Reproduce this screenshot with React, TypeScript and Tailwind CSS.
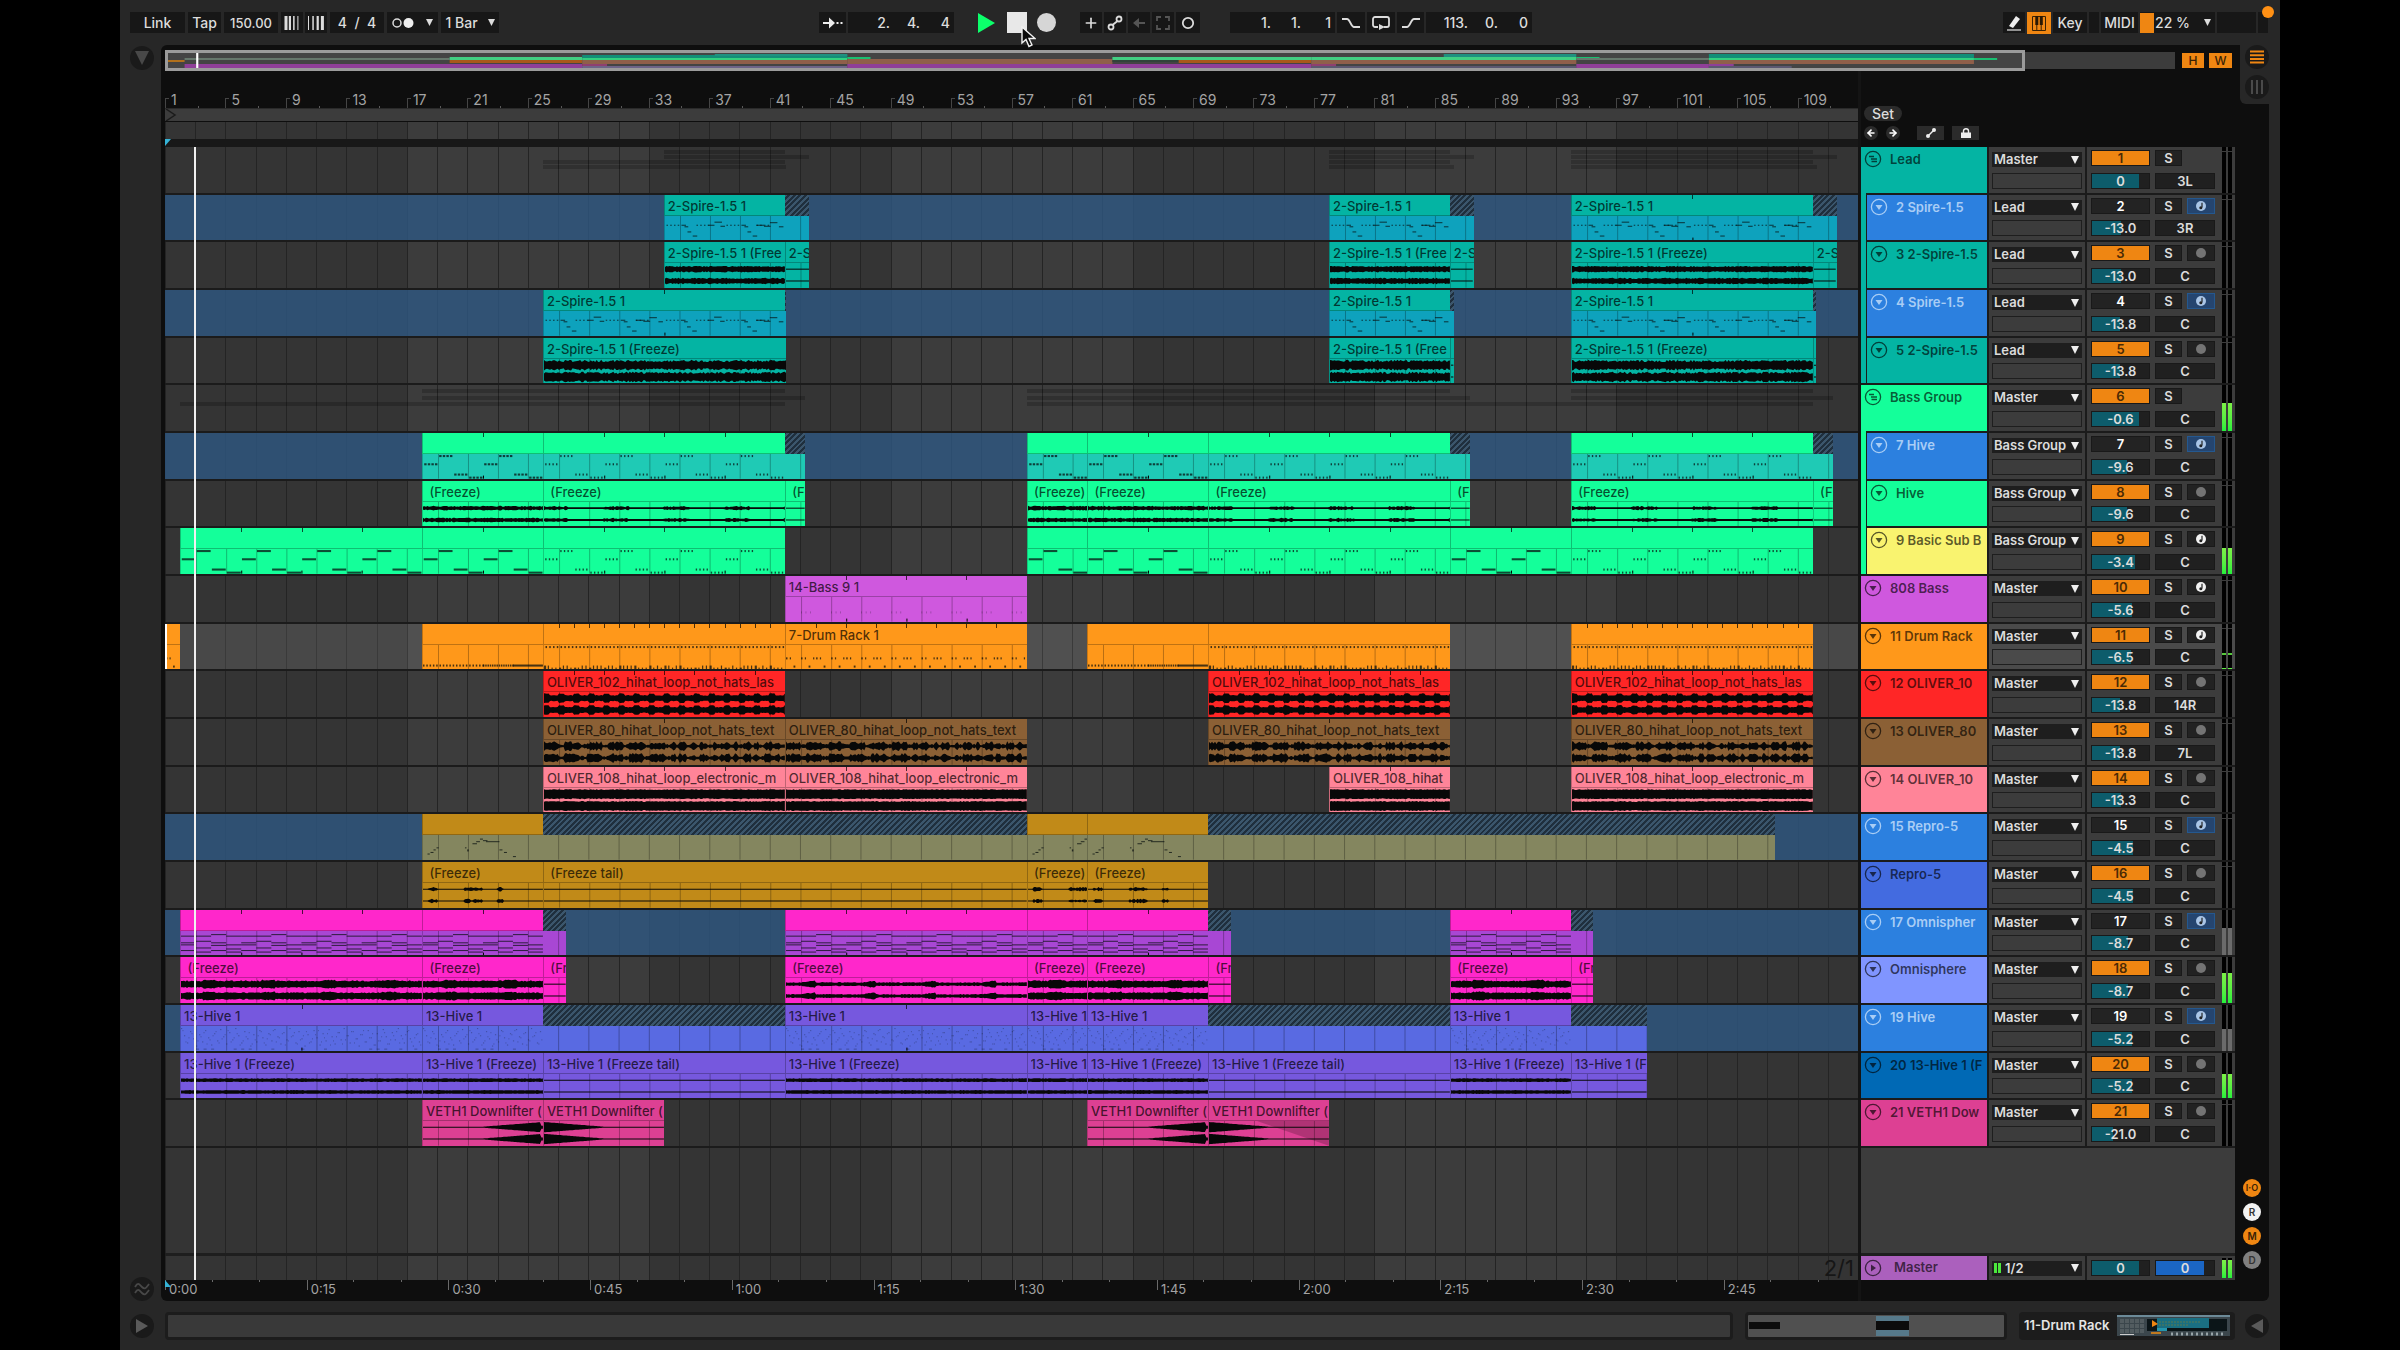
import type { ReactNode } from 'react';
import clsx from 'clsx';
import { ArrowLeft, ArrowRight, Plus } from 'lucide-react';

const BARS = 112;

type Kind =
  | 'none' | 'spire' | 'hiveHeavy' | 'hiveLight' | 'sub' | 'bass' | 'drumRoll' | 'drumFull' | 'drumRack'
  | 'repro' | 'omni' | 'dots'
  | 'wSpire' | 'wLoud' | 'wThin' | 'wHive' | 'wHiveSoft' | 'wRed' | 'wBrown' | 'wPink' | 'wRepro'
  | 'wOmni' | 'wOmniSwell' | 'wFlat' | 'wRise' | 'wFall';

// start bar, end bar, content, title, bars between loop ticks
type Clip = [number, number, Kind, string?, number?];

interface Track {
  num: number;
  name: string;
  head: string;
  group?: boolean;
  child?: string;
  color?: string;
  body?: string;
  frozen?: boolean;
  selected?: boolean;
  out: string;
  vol: string;
  fill: number;
  pan?: string;
  arm?: 'note' | 'audio';
  meter?: number;
  clips: Clip[];
  tails?: [number, number][];
  summary?: [number, number, number][];
}

const TEAL = '#04b4a3';
const GREEN = '#14ff9a';
const BLUE = '#2c80df';
const SP = '2-Spire-1.5 1';
const SPF = '2-Spire-1.5 1 (Freeze)';
const SPF_SHORT = '2-Spire-1.5 1 (Free';
const SPF_TAIL = '2-S';
const FZ = ' (Freeze)';
const HV = '13-Hive 1';
const HVF = '13-Hive 1 (Freeze)';
const HVT = '13-Hive 1 (Freeze tail)';
const O102 = 'OLIVER_102_hihat_loop_not_hats_las';
const O80 = 'OLIVER_80_hihat_loop_not_hats_text';
const O108 = 'OLIVER_108_hihat_loop_electronic_m';
const VETH = 'VETH1 Downlifter (';

const tracks: Track[] = [
  {
    num: 1, name: 'Lead', head: TEAL, group: true, out: 'Master', vol: '0', fill: 83, pan: '3L', clips: [],
    summary: [
      [33, 41, 3], [33, 42.6, 8], [25, 41, 13], [25, 41.1, 18],
      [77, 85, 3], [77, 86.6, 8], [77, 85, 13], [77, 85.3, 18],
      [93, 109, 3], [93, 110.6, 8], [93, 109, 13], [93, 109.3, 18],
    ],
  },
  {
    num: 2, name: '2 Spire-1.5', head: BLUE, child: TEAL, color: TEAL, body: '#0ea2bd', frozen: true,
    out: 'Lead', vol: '-13.0', fill: 50, pan: '3R', arm: 'note',
    clips: [[33, 41, 'spire', SP], [77, 85, 'spire', SP], [93, 109, 'spire', SP, 8]],
    tails: [[41, 42.6], [85, 86.6], [109, 110.6]],
  },
  {
    num: 3, name: '3 2-Spire-1.5', head: TEAL, child: TEAL, color: TEAL, out: 'Lead', vol: '-13.0', fill: 50, arm: 'audio',
    clips: [
      [33, 41, 'wSpire', SPF_SHORT], [41, 42.6, 'wThin', SPF_TAIL], [77, 85, 'wSpire', SPF_SHORT], [85, 86.6, 'wThin', SPF_TAIL],
      [93, 109, 'wSpire', SPF], [109, 110.6, 'wThin', SPF_TAIL],
    ],
  },
  {
    num: 4, name: '4 Spire-1.5', head: BLUE, child: TEAL, color: TEAL, body: '#0ea2bd', frozen: true,
    out: 'Lead', vol: '-13.8', fill: 49, arm: 'note',
    clips: [[25, 41, 'spire', SP, 8], [77, 85, 'spire', SP], [93, 109, 'spire', SP, 8]],
    tails: [[41, 41.1], [85, 85.3], [109, 109.25]],
  },
  {
    num: 5, name: '5 2-Spire-1.5', head: TEAL, child: TEAL, color: TEAL, out: 'Lead', vol: '-13.8', fill: 49, arm: 'audio',
    clips: [
      [25, 41.1, 'wLoud', SPF], [77, 85, 'wLoud', SPF_SHORT], [85, 85.3, 'wThin'],
      [93, 109, 'wLoud', SPF], [109, 109.25, 'wThin'],
    ],
  },
  {
    num: 6, name: 'Bass Group', head: GREEN, group: true, out: 'Master', vol: '-0.6', fill: 83, meter: 62, clips: [],
    summary: [
      [17, 41, 4], [17, 42.35, 11], [1, 41, 17],
      [57, 85, 4], [57, 86.3, 11], [57, 109, 17], [93, 109, 4], [93, 110.35, 11],
    ],
  },
  {
    num: 7, name: '7 Hive', head: BLUE, child: GREEN, color: GREEN, body: '#1fcab5', frozen: true,
    out: 'Bass Group', vol: '-9.6', fill: 61, arm: 'note',
    clips: [
      [17, 25, 'hiveHeavy', '', 4], [25, 41, 'hiveLight', '', 4], [57, 61, 'hiveHeavy'], [61, 69, 'hiveHeavy', '', 4],
      [69, 85, 'hiveLight', '', 4], [93, 109, 'hiveLight', '', 4],
    ],
    tails: [[41, 42.35], [85, 86.35], [109, 110.35]],
  },
  {
    num: 8, name: 'Hive', head: GREEN, child: GREEN, color: GREEN, out: 'Bass Group', vol: '-9.6', fill: 61, arm: 'audio',
    clips: [
      [17, 25, 'wHive', FZ], [25, 41, 'wHiveSoft', FZ], [41, 42.35, 'wThin', ' (F'],
      [57, 61, 'wHive', FZ], [61, 69, 'wHive', FZ], [69, 85, 'wHiveSoft', FZ], [85, 86.35, 'wThin', ' (F'],
      [93, 109, 'wHiveSoft', FZ], [109, 110.35, 'wThin', ' (F'],
    ],
  },
  {
    num: 9, name: '9 Basic Sub B', head: '#f9f36f', child: GREEN, color: GREEN, out: 'Bass Group', vol: '-3.4', fill: 76, arm: 'note', meter: 56,
    clips: [
      [1, 17, 'sub', '', 4], [17, 25, 'sub', '', 4], [25, 41, 'hiveLight', '', 4], [57, 61, 'sub'], [61, 69, 'sub', '', 4],
      [69, 85, 'hiveLight', '', 4], [85, 93, 'sub', '', 4], [93, 109, 'hiveLight', '', 4],
    ],
  },
  {
    num: 10, name: '808 Bass', head: '#cf58de', color: '#cf58de', out: 'Master', vol: '-5.6', fill: 70, arm: 'note',
    clips: [[41, 57, 'bass', '14-Bass 9 1', 4]],
  },
  {
    num: 11, name: '11 Drum Rack', head: '#ff981a', color: '#ff981a', selected: true, out: 'Master', vol: '-6.5', fill: 68, arm: 'note', meter: 3,
    clips: [
      [0, 1, 'drumRack'], [17, 25, 'drumRoll'], [25, 41, 'drumFull', '', 1], [41, 57, 'drumRack', '7-Drum Rack 1', 2],
      [61, 69, 'drumRoll'], [69, 85, 'drumFull'], [93, 109, 'drumFull', '', 1],
    ],
  },
  {
    num: 12, name: '12 OLIVER_10', head: '#ff2626', color: '#ff2626', out: 'Master', vol: '-13.8', fill: 49, pan: '14R', arm: 'audio',
    clips: [[25, 41, 'wRed', O102, 2], [69, 85, 'wRed', O102, 2], [93, 109, 'wRed', O102, 2]],
  },
  {
    num: 13, name: '13 OLIVER_80', head: '#8b6035', color: '#8b6035', out: 'Master', vol: '-13.8', fill: 49, pan: '7L', arm: 'audio',
    clips: [[25, 41, 'wBrown', O80, 8], [41, 57, 'wBrown', O80, 8], [69, 85, 'wBrown', O80, 8], [93, 109, 'wBrown', O80, 8]],
  },
  {
    num: 14, name: '14 OLIVER_10', head: '#ff8498', color: '#ff8498', out: 'Master', vol: '-13.3', fill: 51, arm: 'audio',
    clips: [[25, 41, 'wPink', O108, 4], [41, 57, 'wPink', O108, 4], [77, 85, 'wPink', 'OLIVER_108_hihat', 4], [93, 109, 'wPink', O108, 4]],
  },
  {
    num: 15, name: '15 Repro-5', head: BLUE, color: '#c18a18', body: '#84865f', frozen: true, out: 'Master', vol: '-4.5', fill: 72, arm: 'note',
    clips: [[17, 25, 'repro'], [57, 61, 'repro'], [61, 69, 'repro']],
    tails: [[25, 57], [69, 106.5]],
  },
  {
    num: 16, name: 'Repro-5', head: '#436be0', color: '#c18a18', out: 'Master', vol: '-4.5', fill: 72, arm: 'audio',
    clips: [[17, 25, 'wRepro', FZ], [25, 57, 'wThin', ' (Freeze tail)'], [57, 61, 'wRepro', FZ], [61, 69, 'wRepro', FZ]],
  },
  {
    num: 17, name: '17 Omnispher', head: BLUE, color: '#ff27cb', body: '#a847d4', frozen: true, out: 'Master', vol: '-8.7', fill: 64, arm: 'note', meter: 60,
    clips: [
      [1, 17, 'omni', '', 4], [17, 25, 'omni', '', 4], [41, 57, 'omni', '', 4], [57, 61, 'omni'], [61, 69, 'omni', '', 4],
      [85, 93, 'omni', '', 4],
    ],
    tails: [[25, 26.5], [69, 70.5], [93, 94.5]],
  },
  {
    num: 18, name: 'Omnisphere', head: '#8095ff', color: '#ff27cb', out: 'Master', vol: '-8.7', fill: 64, arm: 'audio', meter: 66,
    clips: [
      [1, 17, 'wOmni', FZ], [17, 25, 'wOmni', FZ], [25, 26.5, 'wThin', ' (Fr'], [41, 57, 'wOmniSwell', FZ],
      [57, 61, 'wOmni', FZ], [61, 69, 'wOmni', FZ], [69, 70.5, 'wThin', ' (Fr'], [85, 93, 'wOmni', FZ], [93, 94.5, 'wThin', ' (Fr'],
    ],
  },
  {
    num: 19, name: '19 Hive', head: BLUE, color: '#7658de', body: '#596ae2', frozen: true, out: 'Master', vol: '-5.2', fill: 71, arm: 'note', meter: 48,
    clips: [
      [1, 17, 'dots', HV, 8], [17, 25, 'dots', HV], [41, 57, 'dots', HV, 8], [57, 61, 'dots', HV], [61, 69, 'dots', HV],
      [85, 93, 'dots', HV],
    ],
    tails: [[25, 41], [69, 85], [93, 98.05]],
  },
  {
    num: 20, name: '20 13-Hive 1 (F', head: '#0069b5', color: '#7658de', out: 'Master', vol: '-5.2', fill: 71, arm: 'audio', meter: 54,
    clips: [
      [1, 17, 'wFlat', HVF], [17, 25, 'wFlat', HVF], [25, 41, 'wThin', HVT], [41, 57, 'wFlat', HVF], [57, 61, 'wFlat', HV],
      [61, 69, 'wFlat', HVF], [69, 85, 'wThin', HVT], [85, 93, 'wFlat', HVF], [93, 98.05, 'wThin', '13-Hive 1 (F'],
    ],
  },
  {
    num: 21, name: '21 VETH1 Dow', head: '#dd4093', color: '#dd4093', out: 'Master', vol: '-21.0', fill: 36, arm: 'audio',
    clips: [[17, 25, 'wRise', VETH], [25, 33, 'wFall', VETH], [61, 69, 'wRise', VETH], [69, 77, 'wFall', VETH]],
  },
];

const U = 15;
const pct = (bars: number) => `${(bars / BARS) * 100}%`;

function noise(i: number) {
  const v = Math.sin(i * 12.9898 + 4.1) * 43758.5453;
  return v - Math.floor(v);
}

// rectangles as [x in bars, y, width in bars, height]
function notes(kind: Kind, len: number) {
  const out: [number, number, number, number][] = [];
  const fill = (from: number, to: number, y: number, step: number, w: number, h: number) => {
    for (let x = from; x < to - 0.01; x += step) out.push([x, y, w, h]);
  };
  for (let b = 0; b < len; b += 4) {
    if (kind === 'spire') {
      const alt = (b / 4) % 2;
      fill(b + 0.1, b + 1, 8.5, 0.25, 0.1, 1);
      out.push([b + 1.1, 8.5, 0.3, 1], [b + 1.3, 10, 0.25, 1], [b + 1.5, 15, 0.25, 1], [b + 1.85, 19, 0.3, 1]);
      fill(b + 2.1, b + 2.9, 8.5, 0.25, 0.1, 1);
      if (alt) out.push([b + 2.1, 8.5, 0.5, 1], [b + 2.6, 9.5, 0.45, 1], [b + 3, 6, 0.5, 1], [b + 3.6, 10, 0.3, 1]);
      else out.push([b + 2.9, 8.5, 0.4, 1], [b + 3.3, 5.5, 0.5, 1], [b + 3.7, 9.5, 0.3, 1]);
    }
    if (kind === 'hiveHeavy' || kind === 'hiveLight') {
      const w = kind === 'hiveHeavy' ? 0.16 : 0.09;
      [9, 1, 19, 22].forEach((y, i) => fill(b + i + 0.08, b + i + 1, y, 0.24, w, 2));
    }
    if (kind === 'sub') {
      [9, 1, 19, 22].forEach((y, i) => out.push([b + i + 0.05, y, 0.92, 2]));
    }
    if (kind === 'omni') {
      out.push([b, 4.5, 2, 1], [b + 2, 3, 1, 1], [b + 3, 4.5, 1, 1]);
      out.push([b, 13, 1, 1], [b + 1, 9.5, 1, 1], [b + 2, 11, 1, 1], [b + 3, 13, 1, 1]);
      out.push([b, 11, 1, 1], [b + 1, 16, 1, 1], [b + 2, 13.5, 1, 1], [b + 3, 17, 1, 1]);
      out.push([b, 18.5, 1, 1], [b + 1, 20, 1, 1], [b + 2, 18.5, 1, 1], [b + 3, 20, 1, 1]);
    }
  }
  if (kind === 'drumRoll') {
    fill(0, 4, 19, 0.22, 0.1, 2);
    fill(4, 6, 19, 0.15, 0.1, 2);
    out.push([6, 19, len - 6, 2]);
  }
  if (kind === 'drumFull') {
    fill(0.1, len, 1, 0.25, 0.1, 2);
    for (let i = 0; i < len * 4; i++) out.push([i / 4, 20 + (noise(i) > 0.5 ? 2 : 0), i % 4 ? 0.08 : 0.14, 4]);
  }
  if (kind === 'drumRack') {
    for (let i = 0; i < len; i++) {
      out.push([i, 12, 0.1, 2], [i + 0.25, 12, 0.08, 2], [i + 0.5, 20, 0.12, 2]);
      if (i % 2) out.push([i + 0.8, 12, 0.08, 2]);
    }
  }
  if (kind === 'bass') {
    for (let b = 0; b < len; b += 2) fill(b + 1, b + 1.8, 14, 0.3, 0.05, 2);
  }
  if (kind === 'repro') {
    out.push([0.3, 18, 0.15, 1], [0.5, 16.5, 0.2, 1], [0.7, 14, 0.15, 1], [0.9, 12, 0.15, 1], [2.8, 12, 0.1, 1], [2.95, 14, 0.1, 2]);
    out.push([3.3, 8, 0.3, 1], [3.55, 6, 0.25, 1], [3.8, 3.5, 0.2, 1]);
    if (len > 4) out.push([4, 5, 0.3, 1], [4.2, 6, 0.9, 1], [5.1, 14, 0.2, 1], [5.4, 16.5, 0.2, 1], [6, 20.5, 0.2, 1]);
  }
  if (kind === 'dots') {
    for (let i = 0; i < len * 5; i++) out.push([i / 5, 2 + ((i * 7) % 18), 0.08, 1], [i / 5 + 0.1, 4 + ((i * 11) % 15), 0.06, 1]);
    for (let i = 0; i < len * 2; i++) if (noise(i) > 0.5) out.push([i / 2, 22, 0.2, 1]);
  }
  return out;
}

function amp(kind: Kind, t: number, len: number, r: number): number {
  switch (kind) {
    case 'wSpire': return 2 + r * 1.2;
    case 'wLoud': return 3 + r * 2.2;
    case 'wHive': return 1.3 + r * 1;
    case 'wHiveSoft': return 0.9 + (t % 4 < 1.6 ? r * 1.2 : 0);
    case 'wRed': return 2.4 + r * 0.6 + (t % 1 < 0.35 ? 1.8 : 0);
    case 'wBrown': return 0.8 + (Math.sin(t * 9) + Math.sin(t * 4.3) > -0.3 ? 1.4 + r * 2.6 : r * 1.5);
    case 'wPink': return 4 + r * 0.9;
    case 'wRepro': return (t > 0.3 && t < 1) || (t > 2.7 && t < 4) || (t > 4.9 && t < 5.4) ? 0.6 + r * 1.6 : 0.5;
    case 'wOmni': return 2.6 + r * 1.1 + (t % 4 > 1.4 && t % 4 < 2.3 ? 0.8 : 0);
    case 'wOmniSwell': return 1.2 + r * 0.8 + (t % 4 > 1 && t % 4 < 2 ? (t % 4 - 1) * 2 : 0);
    case 'wFlat': return 1.4 + r * 0.5;
    case 'wRise': return t < len / 2 ? 0.5 : t > len - 0.2 ? 1.5 : 0.5 + ((t - len / 2) / (len / 2)) * 4.5;
    case 'wFall': return t > len / 2 ? 0.5 : 5 - (t / (len / 2)) * 4.5;
    default: return 0.5;
  }
}

function wavePath(kind: Kind, len: number, mid: number, seed: number) {
  const top: string[] = [];
  const bottom: string[] = [];
  for (let x = 0; x <= len * U; x += 1.5) {
    const a = amp(kind, x / U, len, noise(x + seed));
    top.push(`${x} ${(mid - a).toFixed(1)}`);
    bottom.unshift(`${x} ${(mid + a).toFixed(1)}`);
  }
  return `M${top.join('L')}L${bottom.join('L')}Z`;
}

function ClipBody({ start, end, kind, step }: { start: number; end: number; kind: Kind; step?: number }) {
  const len = end - start;
  const lines: number[] = [];
  for (let b = Math.ceil(start / 2) * 2; b < end; b += 2) if (b > start) lines.push(b - start);
  const isWave = kind[0] === 'w';
  const faint = kind === 'bass' || kind === 'dots';
  return (
    <svg className="block h-full w-full" viewBox={`0 0 ${len * U} 24`} preserveAspectRatio="none" aria-hidden="true">
      {kind === 'wFall' && start > 60 && <path d={`M${len * 6} 0H${len * U}V24Z`} fill="#000" opacity="0.2" />}
      {lines.map(x => <rect key={x} x={x * U} y="0" width="1" height="24" fill="#000" opacity="0.28" />)}
      {isWave ? (
        <>
          <path d={wavePath(kind, len, 6, start)} fill="#080808" />
          <path d={wavePath(kind, len, 17.5, start + 31)} fill="#080808" />
        </>
      ) : (
        notes(kind, len).map(([x, y, w, h], i) => (
          <rect key={i} x={x * U} y={y} width={w * U} height={h} fill="#0a1010" opacity={faint ? 0.3 : 0.75} />
        ))
      )}
      {step && !isWave && step > 2 && Array.from({ length: Math.ceil(len / step) - 1 }, (_, i) => (
        <rect key={`t${i}`} x={(i + 1) * step * U} y="21" width="1" height="3" fill="#000" />
      ))}
    </svg>
  );
}

function ClipView({ clip, track }: { clip: Clip; track: Track }) {
  const [start, end, kind, title, step] = clip;
  const count = step ? Math.ceil((end - start) / step) - 1 : 0;
  return (
    <div
      className="absolute inset-y-0 flex flex-col overflow-hidden"
      style={{ left: pct(start), width: pct(end - start), backgroundColor: track.color }}
    >
      <div className="relative h-[21px] shrink-0 border-b border-l border-black/25 pl-[3px]">
        {Array.from({ length: count }, (_, i) => (
          <i key={i} className="absolute top-0 h-1 w-px bg-black/70" style={{ left: `${(((i + 1) * step!) / (end - start)) * 100}%` }} />
        ))}
        <span className="block overflow-hidden text-[13px] leading-[22px] font-medium whitespace-pre text-black/70">{title}</span>
      </div>
      <div className="min-h-0 flex-1 border-l border-black/20" style={{ backgroundColor: track.body ?? track.color }}>
        <ClipBody start={start} end={end} kind={kind} step={step} />
      </div>
    </div>
  );
}

function Lane({ track }: { track: Track }) {
  return (
    <div className={clsx('relative min-h-0 grow-20 basis-0 border-b-2 border-[#1b1b1b]', track.frozen && 'bg-[#2e5882]/80', track.selected && 'bg-white/10')}>
      {track.summary?.map(([s, e, y], i) => (
        <div key={i} className="absolute h-[4px] bg-black/20" style={{ left: pct(s), width: pct(e - s), top: y }} />
      ))}
      {track.tails?.map(([s, e]) => (
        <div key={s} className="absolute inset-y-0 flex flex-col" style={{ left: pct(s), width: pct(e - s) }}>
          <div className="h-[21px] shrink-0 bg-[repeating-linear-gradient(-45deg,#1f2f3d_0px,#1f2f3d_2px,#3b566c_2px,#3b566c_4px)]" />
          <div className="min-h-0 flex-1" style={{ backgroundColor: track.body }}>
            <ClipBody start={s} end={e} kind="none" />
          </div>
        </div>
      ))}
      {track.clips.map(c => <ClipView key={c[0]} clip={c} track={track} />)}
      {track.num === 11 && <div className="absolute inset-y-0 left-0 w-0.5 bg-white" />}
    </div>
  );
}

function GridLines() {
  return (
    <div className="absolute inset-0 flex" aria-hidden="true">
      {Array.from({ length: BARS / 2 }, (_, i) => (
        <div key={i} className={clsx('flex-1 border-l border-[#242424]', Math.floor(i / 8) % 2 ? 'bg-[#3c3c3c]' : 'bg-[#343434]')} />
      ))}
    </div>
  );
}

function FoldIcon({ group }: { group?: boolean }) {
  return (
    <svg className="size-[18px] shrink-0" viewBox="0 0 18 18" fill="none" stroke="currentColor" strokeWidth="1.3" aria-hidden="true">
      <circle cx="9" cy="9" r="7.6" />
      {group ? <path d="M5 6.5h5M7 9h6M7.5 11.5h5.5" /> : <path d="M5.5 7h7L9 12z" fill="currentColor" stroke="none" />}
    </svg>
  );
}

function Meter({ level = 0, gray, tip }: { level?: number; gray?: boolean; tip?: boolean }) {
  return (
    <div className="flex h-full gap-0.5" aria-hidden="true">
      {[0, 1].map(i => (
        <div key={i} className="flex h-full w-1 flex-col justify-end bg-black">
          {level < 45 && <div className="mt-1 mb-auto h-px bg-[#3c3c3c]" />}
          {tip && <div className="mb-[13px] h-0.5 bg-[#56c83c]" />}
          <div className={gray ? 'bg-[#6b6b6b]' : 'bg-linear-to-t from-[#22f03c] to-[#7cf048]'} style={{ height: `${level}%` }} />
        </div>
      ))}
    </div>
  );
}

function ValueBox({ value, label, fill, color = 'bg-[#0d5c6b]' }: { value: string; label: string; fill?: number; color?: string }) {
  return (
    <div className="relative h-4 w-full border border-[#191919] bg-[#202020]">
      {fill !== undefined && <div className={clsx('absolute inset-y-0 left-0', color)} style={{ width: `${fill}%` }} />}
      <input
        aria-label={label}
        defaultValue={value}
        className="relative block h-full w-full bg-transparent text-center text-[13px] font-semibold text-[#dcdcdc] outline-none"
      />
    </div>
  );
}

function Routing({ value, label, children }: { value: string; label: string; children?: ReactNode }) {
  return (
    <div className="relative flex h-[15px] items-center bg-[#1e1e1e] pl-0.5">
      {children}
      <select aria-label={label} defaultValue={value} className="h-full min-w-0 flex-1 appearance-none bg-transparent text-[13px] leading-[15px] font-semibold text-[#dcdcdc] outline-none">
        <option>{value}</option>
      </select>
      <svg className="pointer-events-none absolute right-[3px] size-2" viewBox="0 0 8 8" aria-hidden="true"><path d="M0 0h8L4 8z" fill="#eee" /></svg>
    </div>
  );
}

function TrackHeader({ track }: { track: Track }) {
  const bg = track.selected ? 'bg-[#4a4a4a]' : 'bg-[#3c3c3c]';
  return (
    <div className="flex min-h-0 grow-20 basis-0 gap-0.5 border-b-2 border-[#1b1b1b]">
      <div className="flex w-[126px] shrink-0">
        {track.child && <div className="-mt-0.5 w-[6px] border-r border-[#1b1b1b]" style={{ backgroundColor: track.child }} />}
        <div
          className={clsx('flex min-w-0 flex-1 items-start gap-2 overflow-hidden pt-[3px] pl-[3px]', track.frozen ? 'text-[#a9cdf5]' : 'text-black/65')}
          style={{ backgroundColor: track.head }}
        >
          <FoldIcon group={track.group} />
          <span className="text-[13px] leading-[18px] font-semibold whitespace-nowrap">{track.name}</span>
        </div>
      </div>
      <div className={clsx('flex w-24 shrink-0 flex-col justify-between px-[3px] pt-[5px] pb-1', bg)}>
        <Routing value={track.out} label={`${track.name} output`} />
        <div className="h-4 border border-[#1e1e1e]" />
      </div>
      <div className={clsx('flex flex-1 gap-[5px] pl-1', bg)}>
        <div className="flex w-[59px] flex-col justify-between pt-[3px] pb-1">
          <button
            aria-label={`Track ${track.num} activator`}
            className={clsx('h-4 border border-[#191919] text-[13px] leading-[14px] font-semibold', track.frozen ? 'bg-[#232323] text-white' : 'bg-[#ef8612] text-[#4a2a05]')}
          >
            {track.num}
          </button>
          <ValueBox value={track.vol} label={`Track ${track.num} volume`} fill={track.fill} />
        </div>
        <div className="flex w-[60px] flex-col justify-between pt-[3px] pb-1">
          <div className="flex justify-between">
            <button className="h-4 w-[27px] border border-[#191919] bg-[#222] text-[13px] leading-[14px] font-semibold text-[#dcdcdc]">S</button>
            {track.arm && (
              <button
                aria-label={`Arm track ${track.num}`}
                className={clsx('flex h-4 w-[28px] items-center justify-center border', track.frozen ? 'border-[#24588f] bg-[#25456f]' : 'border-[#191919] bg-[#222]')}
              >
                {track.arm === 'audio' ? (
                  <span className="size-2.5 rounded-full bg-[#747474]" />
                ) : (
                  <svg className="size-2.5" viewBox="0 0 10 10" aria-hidden="true">
                    <circle cx="5" cy="5" r="5" fill={track.frozen ? '#a9c5e6' : '#f2f2f2'} />
                    <path d="M6 1.8v4.6" stroke="#222" strokeWidth="1.2" />
                    <circle cx="4.8" cy="6.7" r="1.5" fill="#222" />
                  </svg>
                )}
              </button>
            )}
          </div>
          <ValueBox value={track.pan ?? 'C'} label={`Track ${track.num} pan`} />
        </div>
        <div className="pl-0.5">
          <Meter level={track.meter} gray={track.frozen} tip={track.selected} />
        </div>
      </div>
    </div>
  );
}

function Ctl({ className, children, label }: { className?: string; children?: ReactNode; label?: string }) {
  return (
    <button aria-label={label} className={clsx('flex h-[21px] shrink-0 items-center justify-center bg-[#171717] text-[14px] font-medium text-[#dcdcdc]', className)}>
      {children}
    </button>
  );
}

function Position({ parts, label, className }: { parts: string[]; label: string; className: string }) {
  return (
    <div className={clsx('flex h-[21px] justify-end gap-0.5 bg-[#171717] pr-1', className)}>
      {parts.map((p, i) => (
        <input
          key={i}
          aria-label={`${label} ${['bar', 'beat', 'sixteenth'][i]}`}
          defaultValue={p}
          className={clsx('h-full bg-transparent text-right text-[14px] font-medium text-[#dcdcdc] outline-none', i === 0 ? 'w-8' : 'w-7')}
        />
      ))}
    </div>
  );
}

function Caret() {
  return <svg className="h-[7px] w-[7px]" viewBox="0 0 8 8" aria-hidden="true"><path d="M0 0h8L4 8z" fill="#dcdcdc" /></svg>;
}

function Nudge({ flip }: { flip?: boolean }) {
  const widths = flip ? [1, 1.5, 2.2, 3] : [3, 2.2, 1.5, 1];
  return (
    <svg className="h-3.5 w-4" viewBox="0 0 16 14" aria-hidden="true">
      {widths.map((w, i) => <rect key={i} x={i * 4.3 + (flip ? 0 : 0.5)} y="0" width={w} height="14" fill="#dcdcdc" />)}
    </svg>
  );
}

function Toolbar() {
  const stroke = { fill: 'none', stroke: '#dcdcdc', strokeWidth: 1.8 };
  return (
    <header className="flex h-[45px] shrink-0 items-start pt-3 pr-3 pl-2.5">
      <div className="flex gap-[3px]">
        <Ctl className="w-[55px]">Link</Ctl>
        <Ctl className="w-[33px]">Tap</Ctl>
        <input aria-label="Tempo" defaultValue="150.00" className="h-[21px] w-[54px] bg-[#171717] text-center text-[13px] font-medium text-[#dcdcdc] outline-none" />
        <div className="flex gap-0.5">
          <Ctl className="w-[22px]" label="Nudge down"><Nudge /></Ctl>
          <Ctl className="w-[22px]" label="Nudge up"><Nudge flip /></Ctl>
        </div>
        <Ctl className="w-[54px] whitespace-pre">4  /  4</Ctl>
        <Ctl className="w-[51px] gap-3" label="Metronome">
          <svg className="h-2.5 w-[22px]" viewBox="0 0 22 10" aria-hidden="true">
            <circle cx="5" cy="5" r="4" {...stroke} strokeWidth="1.5" />
            <circle cx="16.5" cy="5" r="5" fill="#eee" />
          </svg>
          <Caret />
        </Ctl>
        <Ctl className="w-[58px] gap-2.5">1 Bar <Caret /></Ctl>
      </div>
      <div className="grow-320 basis-0" />
      <div className="flex items-start">
        <Ctl className="w-[27px]" label="Follow">
          <svg className="h-3 w-5" viewBox="0 0 20 12" aria-hidden="true">
            <path d="M0 6h8" stroke="#eee" strokeWidth="2" />
            <path d="M6 0.5L12 6L6 11.5z" fill="#eee" />
            <path d="M13.5 6h2M17.5 6h2" stroke="#eee" strokeWidth="2" />
          </svg>
        </Ctl>
        <Position parts={['2.', '4.', '4']} label="Arrangement position" className="ml-0.5 w-[106px]" />
        <button aria-label="Play" className="ml-6 h-[21px]">
          <svg className="h-5 w-[17px]" viewBox="0 0 17 20" aria-hidden="true"><path d="M0 0l17 10L0 20z" fill="#0cff6b" /></svg>
        </button>
        <button aria-label="Stop" className="relative ml-3 h-[21px] w-5 bg-[#e8e8e8]">
          <svg className="absolute top-3.5 left-3.5 h-[22px] w-[15px]" viewBox="0 0 15 22" aria-hidden="true">
            <path d="M1 1v16l4-3.500l3 7l3-1.500l-3-6.500h6z" fill="#0b0b0b" stroke="#f2f2f2" strokeWidth="1.400" />
          </svg>
        </button>
        <button aria-label="Record" className="ml-[10px] mt-px h-[19px] w-[19px] rounded-full bg-[#d6d6d6]" />
        <div className="ml-6 flex gap-0.5">
          <Ctl className="w-[22px]" label="Overdub"><Plus className="size-4" strokeWidth={2.500} /></Ctl>
          <Ctl className="w-[22px]" label="Automation arm">
            <svg className="size-4" viewBox="0 0 16 16" aria-hidden="true">
              <circle cx="4" cy="12" r="2.500" {...stroke} /><circle cx="12" cy="4" r="2.500" {...stroke} />
              <path d="M5.500 10l5-4" {...stroke} />
            </svg>
          </Ctl>
          <Ctl className="w-[22px]" label="Re-enable automation">
            <svg className="size-3.5" viewBox="0 0 14 14" aria-hidden="true"><path d="M13 7H5" stroke="#555" strokeWidth="2" /><path d="M7 2v10L1 7z" fill="#555" /></svg>
          </Ctl>
          <Ctl className="w-[22px]" label="Capture">
            <svg className="size-3.5" viewBox="0 0 14 14" fill="none" stroke="#555" strokeWidth="1.800" aria-hidden="true">
              <path d="M1 5V1h4M9 1h4v4M13 9v4H9M5 13H1V9" />
            </svg>
          </Ctl>
          <Ctl className="w-6" label="Session record">
            <svg className="size-3.5" viewBox="0 0 14 14" aria-hidden="true"><circle cx="7" cy="7" r="5.200" {...stroke} /></svg>
          </Ctl>
        </div>
        <div className="ml-[30px] flex gap-0.5">
          <Position parts={['1.', '1.', '1']} label="Loop start" className="w-[105px]" />
          <Ctl className="w-7" label="Punch in"><svg className="h-3 w-[18px]" viewBox="0 0 18 12" aria-hidden="true"><path d="M0 2h5c3 0 4 8 7 8h6" {...stroke} /></svg></Ctl>
          <Ctl className="w-7" label="Loop">
            <svg className="h-3.5 w-[18px]" viewBox="0 0 18 14" aria-hidden="true">
              <path d="M6 11H3a2 2 0 0 1-2-2V3a2 2 0 0 1 2-2h12a2 2 0 0 1 2 2v6a2 2 0 0 1-2 2h-3" {...stroke} />
              <path d="M7 8l6 3l-6 3z" fill="#dcdcdc" />
            </svg>
          </Ctl>
          <Ctl className="w-[27px]" label="Punch out"><svg className="h-3 w-[18px]" viewBox="0 0 18 12" aria-hidden="true"><path d="M0 10h5c3 0 4-8 7-8h6" {...stroke} /></svg></Ctl>
          <Position parts={['113.', '0.', '0']} label="Loop length" className="w-[106px]" />
        </div>
      </div>
      <div className="grow-471 basis-0" />
      <div className="flex gap-0.5">
        <Ctl className="w-[22px]" label="Draw mode">
          <svg className="size-4" viewBox="0 0 16 16" aria-hidden="true">
            <path d="M3 11l7-10l4 3l-7 9z" fill="#eee" /><path d="M1 15h14" stroke="#bbb" strokeWidth="1.500" />
          </svg>
        </Ctl>
        <button aria-label="Computer MIDI keyboard" className="flex h-[22px] w-6 items-center justify-center bg-[#ef8612]">
          <svg className="h-[15px] w-3.5" viewBox="0 0 14 15" aria-hidden="true">
            <path d="M.5.5h13v14H.5zM4.800 9v5M9.200 9v5" fill="none" stroke="#3a2205" /><path d="M3.300 0h3v9h-3zM7.800 0h3v9h-3z" fill="#2a1803" />
          </svg>
        </button>
        <Ctl className="w-[34px]">Key</Ctl>
        <Ctl className="w-[10px]" label="Key indicator" />
        <Ctl className="w-[37px]">MIDI</Ctl>
        <Ctl className="w-[75px] !justify-start pr-1"><span className="mr-px h-5 w-3.5 bg-[#ef8612]" />22 % <span className="ml-auto"><Caret /></span></Ctl>
        <Ctl className="w-[39px]" label="Disk overload" />
        <div className="relative">
          <Ctl className="w-[10px]" label="MIDI in" />
          <span className="absolute -top-1.5 left-1 size-3 rounded-full bg-[#ff9014]" />
        </div>
      </div>
    </header>
  );
}

// start, end, y, height, colour
const overview: [number, number, number, number, string][] = [
  [1, 17, 5, 2, '#66776c'], [0, 1, 7, 2, '#b0701c'], [1, 25, 11, 4, '#8f3f98'],
  [17, 25, 4, 3, '#42cf83'], [17, 25, 7, 3, '#a8581a'],
  [25, 41, 2, 3, '#128e78'], [33, 41, 1, 2, '#1f9180'], [25, 41, 5, 2, '#35cf7f'], [25, 41, 7, 4, '#8f5f4a'],
  [25, 26.5, 11, 3, '#8f3f70'], [25, 41, 13, 2, '#6e6488'], [41, 42.4, 4, 2, '#1bbf72'],
  [41, 57, 6, 5, '#8f5f4a'], [41, 69, 11, 4, '#8f3f98'],
  [57, 69, 4, 3, '#42cf83'], [57, 61, 7, 2, '#31433a'], [61, 69, 7, 3, '#a8581a'],
  [69, 85, 4, 3, '#42cf83'], [69, 85, 7, 4, '#8f5f4a'], [69, 70.5, 11, 4, '#8f3f70'], [77, 85, 1, 3, '#1f9180'],
  [69, 85, 13, 2, '#5c5870'], [85, 86.4, 4, 2, '#1bbf72'], [85, 93, 5, 2, '#66776c'], [85, 93, 11, 4, '#8f3f98'],
  [93, 109, 1, 4, '#128e78'], [93, 109, 5, 2, '#35cf7f'], [93, 109, 7, 4, '#8f5f4a'],
  [93, 94.5, 11, 4, '#8f3f98'], [93, 98, 13, 2, '#5c5870'], [109, 110.4, 5, 2, '#1bbf72'],
];

function Overview() {
  return (
    <div className="flex h-[21px] items-center">
      <div className="h-full flex-1 border-3 border-[#9b9b9b] bg-[#444]">
        <svg className="block h-full w-full" viewBox="0 0 1119 15" preserveAspectRatio="none" aria-label="Arrangement overview">
          {overview.map(([s, e, y, h, c], i) => <rect key={i} x={s * 10} y={y} width={(e - s) * 10} height={h} fill={c} />)}
          <rect x="17" y="0" width="1.300" height="15" fill="#fff" />
        </svg>
      </div>
      <div className="h-[17px] w-[150px] bg-[#3c3c3c]" />
      <button aria-label="Optimize height" className="ml-[7px] h-[15px] w-[22px] bg-[#ef8612] text-[12px] leading-[15px] font-medium text-[#3a2205]">H</button>
      <button aria-label="Optimize width" className="mr-[3px] ml-[5px] h-[15px] w-[23px] bg-[#ef8612] text-[12px] leading-[15px] font-medium text-[#3a2205]">W</button>
    </div>
  );
}

function Timeline() {
  return (
    <div className="flex min-w-0 flex-1 flex-col">
      <div className="flex h-[38px] shrink-0 items-end overflow-hidden border-b border-[#2a2a2a]">
        {Array.from({ length: 28 }, (_, i) => (
          <div key={i} className="flex flex-1 items-end">
            <span className="h-2.5 w-1 border-t border-l border-[#454545]" />
            <span className="w-0 pl-0.5 text-[14px] leading-[17px] text-[#a4a4a4]">{i * 4 + 1}</span>
            <span className="mx-auto h-0.5 w-px bg-[#5a5a5a]" />
          </div>
        ))}
      </div>
      <div className="h-3 shrink-0 bg-[#3c3c3c]">
        <svg className="h-3 w-3" viewBox="0 0 12 12" aria-hidden="true"><path d="M1 0l9 6l-9 6" fill="none" stroke="#1b1b1b" strokeWidth="1.500" /></svg>
      </div>
      <div className="relative mt-px h-[17px] shrink-0"><GridLines /></div>
      <div className="h-2 shrink-0 bg-[#181818]">
        <svg className="h-[7px] w-[6px]" viewBox="0 0 6 7" aria-hidden="true"><path d="M0 0h6L0 7z" fill="#35b3d6" /></svg>
      </div>
      <div className="relative flex min-h-0 flex-1 flex-col">
        <GridLines />
        {tracks.map(t => <Lane key={t.num} track={t} />)}
        <div className="relative grow-46 basis-0 border-b-3 border-[#1e1e1e]" />
        <div className="relative h-6 shrink-0 pr-1 text-right text-[22px] leading-6 text-[#161616]">2/1</div>
        <div className="absolute inset-y-0 w-0.5 bg-[#f0f0f0]" style={{ left: pct(1.93) }} />
      </div>
      <div className="relative flex h-[21px] shrink-0 overflow-hidden">
        {Array.from({ length: 12 }, (_, i) => (
          <div key={i} className="relative flex shrink-0 justify-evenly" style={{ width: pct(9.375) }}>
            <span className="absolute top-0 left-0 h-2.5 w-px bg-[#6a6a6a]" />
            <span className="absolute top-0 left-1 text-[13px] leading-[18px] text-[#a4a4a4]">{Math.floor(i / 4)}:{String((i % 4) * 15).padStart(2, '0')}</span>
            <span className="h-0.5 w-px bg-[#6a6a6a]" />
            <span className="h-0.5 w-px bg-[#6a6a6a]" />
          </div>
        ))}
        <svg className="absolute top-0 left-0 h-[7px] w-[6px]" viewBox="0 0 6 7" aria-hidden="true"><path d="M0 0l6 7H0z" fill="#35b3d6" /></svg>
      </div>
    </div>
  );
}

function Headers() {
  return (
    <div className="flex w-[377px] shrink-0 flex-col border-l-3 border-[#141414]">
      <div className="flex h-[76px] shrink-0 flex-col items-start justify-end gap-[5px] pb-[7px] pl-[3px]">
        <button className="h-[15px] rounded-full bg-[#2b2b2b] px-2 text-[14px] leading-[15px] font-medium text-[#dcdcdc]">Set</button>
        <div className="flex h-3.5">
          <button aria-label="Previous locator" className="flex size-3.5 items-center justify-center rounded-full bg-[#2b2b2b] text-white"><ArrowLeft className="size-2.5" strokeWidth={4} /></button>
          <button aria-label="Next locator" className="ml-2 flex size-3.5 items-center justify-center rounded-full bg-[#2b2b2b] text-white"><ArrowRight className="size-2.5" strokeWidth={4} /></button>
          <button aria-label="Automation mode" className="ml-[17px] flex w-[27px] items-center justify-center bg-[#2b2b2b]">
            <svg className="size-2.5" viewBox="0 0 10 10" aria-hidden="true"><circle cx="2" cy="8" r="2" fill="#eee" /><circle cx="8" cy="2" r="2" fill="#eee" /><path d="M2 8l6-6" stroke="#eee" strokeWidth="1.500" /></svg>
          </button>
          <button aria-label="Lock envelopes" className="ml-2 flex w-[27px] items-center justify-center bg-[#2b2b2b]">
            <svg className="size-2.5" viewBox="0 0 10 10" aria-hidden="true"><path d="M0 4.500h10V10H0z" fill="#eee" /><path d="M2.500 5V3a2.500 2.300 0 0 1 5 0v2" fill="none" stroke="#eee" strokeWidth="1.400" /></svg>
          </button>
        </div>
      </div>
      <div className="flex min-h-0 flex-1 flex-col bg-[#1b1b1b]">
        {tracks.map(t => <TrackHeader key={t.num} track={t} />)}
        <div className="grow-46 basis-0 border-b-3 border-[#1e1e1e] bg-[#3c3c3c]" />
        <div className="flex h-6 shrink-0 gap-0.5">
          <div className="flex w-[126px] items-center gap-3 bg-[#ab60bd] pl-[3px] text-black/65">
            <svg className="size-[18px]" viewBox="0 0 18 18" fill="none" stroke="currentColor" strokeWidth="1.300" aria-hidden="true">
              <circle cx="9" cy="9" r="7.600" /><path d="M7 5.500v7L12 9z" fill="currentColor" stroke="none" />
            </svg>
            <span className="text-[13px] font-semibold">Master</span>
          </div>
          <div className="flex w-24 flex-col justify-center bg-[#3c3c3c] px-[3px]">
            <Routing value="1/2" label="Master output">
              <span className="mr-1 flex h-2.5 gap-px"><i className="w-[3px] bg-[#4be83c]" /><i className="w-[3px] bg-[#4be83c]" /></span>
            </Routing>
          </div>
          <div className="flex flex-1 items-center gap-[5px] bg-[#3c3c3c] pl-1">
            <div className="w-[59px]"><ValueBox value="0" label="Master volume" fill={83} /></div>
            <div className="w-[60px]"><ValueBox value="0" label="Cue volume" fill={83} color="bg-[#1b66c4]" /></div>
            <div className="h-5 pl-0.5"><Meter level={90} /></div>
          </div>
        </div>
      </div>
      <div className="h-[21px] shrink-0" />
    </div>
  );
}

function RoundButton({ label, children }: { label: string; children: ReactNode }) {
  return <button aria-label={label} className="flex size-6 items-center justify-center rounded-full bg-[#1a1a1a]">{children}</button>;
}

export default function App() {
  return (
    <div className="h-screen min-h-[1100px] bg-black px-30 font-['Inter','Liberation_Sans',sans-serif]">
      <div className="flex h-full flex-col bg-[#272727]">
        <Toolbar />
        <main className="flex min-h-0 flex-1 pr-[11px]">
          <div className="flex w-[41px] shrink-0 flex-col justify-between pt-px pl-[10px]">
            <RoundButton label="Hide browser"><svg className="size-3.5" viewBox="0 0 14 14" aria-hidden="true"><path d="M0 0h14L7 14z" fill="#484848" /></svg></RoundButton>
            <RoundButton label="Groove pool"><svg className="size-4" viewBox="0 0 16 16" fill="none" stroke="#484848" strokeWidth="1.800" aria-hidden="true"><path d="M1 6c3-5 4-3 7 0s4 1 7-3M1 12c3-5 4-3 7 0s4 1 7-3" /></svg></RoundButton>
          </div>
          <div className="flex min-w-0 flex-1 rounded-md bg-[#0e0e0e]">
            <div className="flex min-w-0 flex-1 flex-col pt-[5px] pr-[5px] pl-1">
              <Overview />
              <div className="flex min-h-0 flex-1">
                <Timeline />
                <Headers />
              </div>
            </div>
            <div className="flex w-[29px] shrink-0 flex-col justify-between pb-8">
              <div className="flex h-[59px] flex-col items-center gap-1.5 rounded-bl-md bg-[#272727] pl-[5px]">
                <RoundButton label="Arrangement view"><svg className="size-3.5" viewBox="0 0 14 14" aria-hidden="true"><path d="M0 1.500h14M0 5.200h14M0 8.900h14M0 12.500h14" stroke="#ef8612" strokeWidth="2" /></svg></RoundButton>
                <RoundButton label="Session view"><svg className="size-3.5" viewBox="0 0 14 14" aria-hidden="true"><path d="M2 0v14M7 0v14M12 0v14" stroke="#4a4a4a" strokeWidth="2" /></svg></RoundButton>
              </div>
              <div className="flex flex-col gap-1.5 pl-[3px]">
                <button aria-label="Show I/O" className="size-[18px] rounded-full bg-[#ef8612] text-[9px] font-semibold text-[#3a2205]">I·O</button>
                <button aria-label="Show returns" className="size-[18px] rounded-full bg-[#f2f2f2] text-[10px] font-semibold text-[#333]">R</button>
                <button aria-label="Show mixer" className="size-[18px] rounded-full bg-[#ef8612] text-[10px] font-semibold text-[#3a2205]">M</button>
                <button aria-label="Show delay" className="size-[18px] rounded-full bg-[#808080] text-[10px] font-semibold text-[#333]">D</button>
              </div>
            </div>
          </div>
        </main>
        <footer className="flex h-[49px] shrink-0 items-center pr-[11px] pl-[10px]">
          <RoundButton label="Show clip view"><svg className="size-3.5" viewBox="0 0 14 14" aria-hidden="true"><path d="M1 0l12 7L1 14z" fill="#5a5a5a" /></svg></RoundButton>
          <div className="ml-[11px] h-7 flex-1 rounded-sm border-3 border-[#1c1c1c] bg-[#393939]" />
          <div className="ml-3 flex h-7 w-[262px] items-center rounded-sm border-3 border-[#1c1c1c] bg-[#505050]">
            <div className="ml-px h-[7px] w-[31px] bg-[#0c0c0c]" />
            <div className="ml-[96px] flex h-5 w-[33px] items-center bg-[#56798a]"><div className="h-[9px] w-full bg-[#0c0c0c]" /></div>
          </div>
          <button className="ml-3 flex h-7 w-[216px] items-center justify-between rounded-sm bg-[#1c1c1c] px-[5px] text-[13px] font-semibold whitespace-nowrap text-[#e4e4e4]">
            11-Drum Rack
            <svg className="h-[21px] w-[113px]" viewBox="0 0 113 21" aria-hidden="true">
              <rect width="113" height="21" fill="#3b464c" />
              <rect width="113" height="2" fill="#6c8a98" />
              {Array.from({ length: 15 }, (_, i) => <rect key={i} x={3 + (i % 5) * 5} y={4 + Math.floor(i / 5) * 5} width="4" height="4" fill="#525c60" />)}
              <rect x="3" y="19" width="14" height="1" fill="#ccc" />
              <rect x="30" y="4" width="80" height="12" fill="#0b1518" />
              <rect x="40" y="3" width="52" height="10" fill="#1a6f82" />
              <path d="M35 5l6 4l-6 3z" fill="#ef8612" />
              <path d="M42 7h42M42 10h30" stroke="#5a7a50" strokeDasharray="2 1" />
              <path d="M34 18h10" stroke="#c07a20" strokeWidth="2" />
              <path d="M54 19h54" stroke="#98a4a8" strokeDasharray="2 3" strokeWidth="3" />
              <rect x="40" y="13" width="10" height="3" fill="#2596ad" />
            </svg>
          </button>
          <div className="ml-2.5"><RoundButton label="Show device view"><svg className="size-3.5" viewBox="0 0 14 14" aria-hidden="true"><path d="M13 0L1 7l12 7z" fill="#5a5a5a" /></svg></RoundButton></div>
        </footer>
      </div>
    </div>
  );
}
